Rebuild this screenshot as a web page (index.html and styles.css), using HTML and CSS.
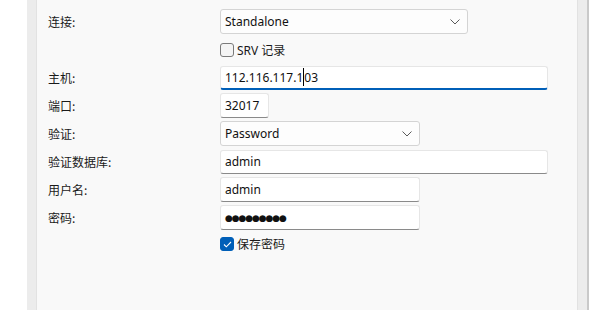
FILE: index.html
```html
<!DOCTYPE html>
<html lang="zh">
<head>
<meta charset="utf-8">
<link rel="stylesheet" href="styles.css">
</head>
<body>
<div class="frame">
  <div class="gutter-left"></div>
  <div class="band-left"></div>
  <main class="panel">
    <div class="form">
      <div class="label">连接:</div>
      <div class="field"><div class="combo wide"><span>Standalone</span><svg class="chev" width="10" height="6" viewBox="0 0 10 6"><path d="M0.5 0.5 L5 5 L9.5 0.5" fill="none" stroke="#5a5a5a" stroke-width="1"/></svg></div></div>

      <div class="label"></div>
      <div class="field"><label class="check"><span class="box"></span><span>SRV 记录</span></label></div>

      <div class="label">主机:</div>
      <div class="field"><div class="input full focused"><span>112.116.117.1</span><span class="caret"></span><span>03</span></div></div>

      <div class="label">端口:</div>
      <div class="field"><div class="input port"><span>32017</span></div></div>

      <div class="label">验证:</div>
      <div class="field"><div class="combo mid"><span>Password</span><svg class="chev" width="10" height="6" viewBox="0 0 10 6"><path d="M0.5 0.5 L5 5 L9.5 0.5" fill="none" stroke="#5a5a5a" stroke-width="1"/></svg></div></div>

      <div class="label">验证数据库:</div>
      <div class="field"><div class="input full"><span>admin</span></div></div>

      <div class="label">用户名:</div>
      <div class="field"><div class="input mid"><span>admin</span></div></div>

      <div class="label">密码:</div>
      <div class="field"><div class="input mid"><span class="dots">●●●●●●●●●</span></div></div>

      <div class="label"></div>
      <div class="field top"><label class="check"><span class="box on"><svg width="9" height="7" viewBox="0 0 9 7"><path d="M1 3.5 L3.3 5.8 L8 1" fill="none" stroke="#fff" stroke-width="1.1"/></svg></span><span>保存密码</span></label></div>
    </div>
  </main>
  <div class="band-right"></div>
  <div class="edge-right"></div>
</div>
</body>
</html>
```
FILE: styles.css
```css
* { box-sizing: border-box; }
html, body { margin: 0; padding: 0; }
body {
  width: 589px;
  height: 310px;
  overflow: hidden;
  background: #ffffff;
  font-family: "Segoe UI", "Noto Sans", "Noto Sans CJK SC", sans-serif;
  font-size: 12px;
  color: #1a1a1a;
}
.frame { display: flex; height: 310px; }
.gutter-left { width: 27px; background: #ffffff; }
.band-left { width: 10px; background: #ececec; border-right: 1px solid #e2e2e2; }
.panel { flex: 1; background: #f9f9f9; }
.band-right { width: 10px; background: #ececec; border-left: 1px solid #e2e2e2; }
.edge-right { width: 2px; background: #c9c9c9; }

.form {
  display: grid;
  grid-template-columns: 183px 1fr;
  grid-auto-rows: 25px;
  row-gap: 3px;
  padding-top: 9px;
}
.label {
  padding-left: 11px;
  display: flex;
  align-items: center;
  font-family: "Noto Sans CJK SC", sans-serif;
  font-size: 12px;
}
.field { display: flex; align-items: center; }
.field.top { align-items: flex-start; padding-top: 2px; }

.combo, .input {
  height: 25px;
  display: flex;
  align-items: center;
  padding-left: 4px;
  font-family: "Noto Sans", "Noto Sans CJK SC", sans-serif;
  font-size: 12px;
  color: #111;
}
.combo {
  background: #fdfdfd;
  border: 1px solid #d4d4d4;
  border-radius: 3px;
  justify-content: space-between;
  padding-right: 7px;
}
.combo.wide { width: 248px; }
.combo.mid { width: 200px; }
.input {
  background: #ffffff;
  border: 1px solid #e6e6e6;
  border-bottom: 1px solid #8a8a8a;
  border-radius: 3px;
}
.input.full { width: 328px; height: 24px; }
.input.mid { width: 200px; }
.input.port { width: 49px; }
.input.focused {
  border-bottom: 2px solid #005fb8;
}
.caret {
  display: inline-block;
  width: 1px;
  height: 18px;
  background: #000;
}
.dots {
  font-family: "DejaVu Sans", sans-serif;
  font-size: 9px;
  letter-spacing: -1.1px;
}

.check {
  display: flex;
  align-items: center;
  gap: 3px;
  font-family: "Noto Sans", "Noto Sans CJK SC", sans-serif;
  font-size: 12px;
}
.box {
  width: 14px;
  height: 14px;
  border: 1px solid #7a7a7a;
  border-radius: 3px;
  background: #f4f4f4;
  display: flex;
  align-items: center;
  justify-content: center;
}
.box.on { background: #005fb8; border-color: #005fb8; }
```
